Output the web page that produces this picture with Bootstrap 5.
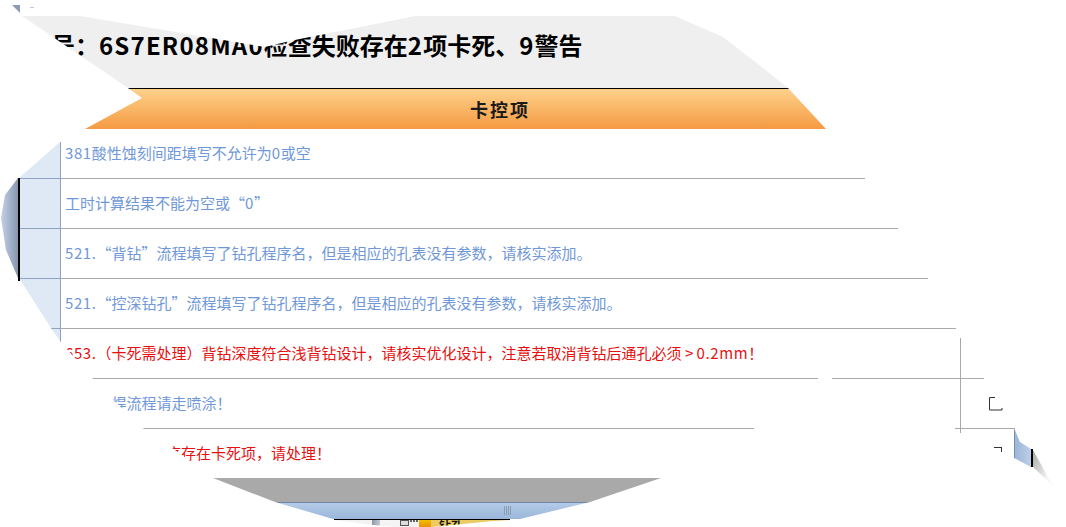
<!DOCTYPE html>
<html lang="zh">
<head>
<meta charset="utf-8">
<title>检查结果</title>
<link href="https://cdn.jsdelivr.net/npm/bootstrap@5.3.0/dist/css/bootstrap.min.css" rel="stylesheet">
<style>
html,body{height:527px;overflow:hidden;background:#fff}
body{font-family:"Noto Sans CJK SC","Liberation Sans",sans-serif;position:relative}
.sheet{width:1066px;padding-top:16px}
.title-band{height:72px;background:#efefef;color:#000;font-size:24px;font-weight:700;padding-left:27px;line-height:58px;
 clip-path:polygon(22px 0,80px 0,265px 31px,290px 25px,415px 0,675px 0,723px 21px,754px 45px,788px 72px,128px 72px)}
.title-num{letter-spacing:1.2px}
.head-band{height:41px;border-top:1px solid #000;background:linear-gradient(#fdd18b,#f59a42);font-size:18px;font-weight:700;letter-spacing:2px;color:#1a1a1a;padding-left:470px;line-height:40px;
 clip-path:polygon(128px 0,788px 0,826px 41px,85px 41px,142px 10px)}
.grid-area{clip-path:polygon(61px 13px,61px 0,865px 0,865px 50px,898px 50px,898px 100px,928px 100px,928px 150px,956px 150px,956px 200px,984px 200px,984px 250px,832px 250px,832px 249px,818px 249px,818px 250px,754px 250px,754px 300px,754px 349px,214px 349px,168px 316px,144px 300px,108px 266px,93px 250px,60px 212px,51px 199px,19px 149px,19px 49px,60px 13px)}
.grid-row{height:50px;border-bottom:1px solid #a9a9a9}
.grid-row:last-child{height:49px;border-bottom:0}
.row-mark{width:61px;height:50px;flex:none;background:#dfe8f5;border-right:1px solid #8ea3c3;border-bottom:1px solid #8ea3c3}
.row-text{font-size:15px;padding:0 0 0 4px;line-height:47px;white-space:nowrap}
.row-num{letter-spacing:.6px}
.tone-info{color:#7098d8}
.tone-stop{color:#e61010}
.gray-band{height:24px;background:#a9a9a9;clip-path:polygon(213px 0,661px 0,590px 24px,275px 24px)}
.scroll-band{height:17px;border-top:1px solid #6f86a6;background:linear-gradient(#b4cbe8,#9ab6d9);position:relative;clip-path:polygon(275px 0,590px 0,520px 17px,333px 17px)}
.grip{position:absolute;left:504px;top:3px;width:7px;height:9px;background:repeating-linear-gradient(90deg,#8b9db5 0 1px,transparent 1px 2px)}
.bar-edge{height:1px;background:#000;width:176px;margin-left:334px}
.tool-bit{height:7px;width:176px;margin-left:334px;overflow:hidden;background:#f2f2f2;clip-path:polygon(0 0,176px 0,159px 1px,98px 7px,66px 7px,39px 5px)}
.tool-handle{width:8px;margin-left:38px;background:linear-gradient(90deg,#8e99a6,#c3cbd4)}
.tool-gap{width:20px;background:#f4f4f4}
.tool-box{width:9px;height:6px;margin-left:0;border:1px solid #555;background:#ddd}
.tool-dots{width:8px;border-top:2px dotted #666;height:2px;margin-left:1px}
.tool-hot{width:12px;margin-left:1px;background:linear-gradient(#f4c000,#e8900a)}
.tool-label{flex:1;background:#eccb63;font-size:12px;font-weight:700;line-height:12px;padding-left:8px;color:#111;height:12px;white-space:nowrap}
.edge-strip{position:absolute;left:0;top:178px;width:19px;height:102px;background:linear-gradient(90deg,#c7d5e9,#8293ad);clip-path:polygon(18px 0,19px 0,19px 102px,18px 100px,6px 72px,1px 40px,5px 17px)}
.edge-line{position:absolute;left:18px;top:178px;width:2px;height:103px;background:#000}
.corner-chip{position:absolute;left:12px;top:5px;width:8px;height:8px;background:#8f9bb3;clip-path:polygon(0 0,100% 0,100% 100%)}
.tick{position:absolute;left:30px;top:7px;width:4px;height:1px;background:#c4ccd8}
.v-rule{position:absolute;left:960px;top:338px;width:1px;height:95px;background:#a9a9a9}
.h-rule{position:absolute;left:955px;top:428px;width:60px;height:1px;background:#a9a9a9}
.mark-a{position:absolute;left:989px;top:397px}
.mark-b{position:absolute;left:994px;top:447px;width:8px;height:5px;border-top:1px solid #333;border-right:1px solid #333}
.sliver{position:absolute;left:1014px;top:428px;width:17px;height:39px;border-left:1px solid #7a8fae;background:linear-gradient(90deg,#9cb6d9,#bccfe8);clip-path:polygon(0 0,6px 14px,17px 21px,17px 39px,0 30px)}
.sliver-end{position:absolute;left:1031px;top:449px;width:2px;height:18px;background:#000}
.shade-tail{position:absolute;left:1033px;top:450px;width:20px;height:36px;background:linear-gradient(115deg,#a8a8a8,#f6f6f6 75%);clip-path:polygon(0 0,20px 36px,0 17px)}
</style>
</head>
<body>
<div class="sheet">
  <div class="title-band text-nowrap">料号：<span class="title-num">6S7ER08MA0</span>检查失败存在<span class="title-num">2</span>项卡死、<span class="title-num">9</span>警告</div>
  <div class="head-band">卡控项</div>
  <div class="grid-area">
    <div class="grid-row d-flex"><div class="row-mark"></div><div class="row-text tone-info"><span class="row-num">381</span>酸性蚀刻间距填写不允许为<span class="row-num">0</span>或空</div></div>
    <div class="grid-row d-flex"><div class="row-mark"></div><div class="row-text tone-info">工时计算结果不能为空或“<span class="row-num">0</span>”</div></div>
    <div class="grid-row d-flex"><div class="row-mark"></div><div class="row-text tone-info"><span class="row-num">521.</span>“背钻”流程填写了钻孔程序名，但是相应的孔表没有参数，请核实添加。</div></div>
    <div class="grid-row d-flex"><div class="row-mark"></div><div class="row-text tone-info"><span class="row-num">521.</span>“控深钻孔”流程填写了钻孔程序名，但是相应的孔表没有参数，请核实添加。</div></div>
    <div class="grid-row d-flex"><div class="row-mark"></div><div class="row-text tone-stop"><span class="row-num">653.</span>（卡死需处理）背钻深度符合浅背钻设计，请核实优化设计，注意若取消背钻后通孔必须 &gt; <span class="row-num">0.2mm</span>！</div></div>
    <div class="grid-row d-flex"><div class="row-mark"></div><div class="row-text tone-info"><span class="row-num">654.</span>阻焊流程请走喷涂！</div></div>
    <div class="grid-row d-flex"><div class="row-mark"></div><div class="row-text tone-stop"><span class="row-num">65.</span> 钻孔工序程序存在卡死项，请处理！</div></div>
  </div>
  <div class="gray-band"></div>
  <div class="scroll-band"><div class="grip"></div></div>
  <div class="bar-edge"></div>
  <div class="tool-bit d-flex">
    <div class="tool-handle"></div><div class="tool-gap"></div><div class="tool-box"></div><div class="tool-dots"></div><div class="tool-hot"></div><div class="tool-label">钻孔</div>
  </div>
</div>
<div class="corner-chip"></div><div class="tick"></div>
<div class="edge-strip"></div><div class="edge-line"></div>
<div class="v-rule"></div><div class="h-rule"></div>
<svg class="mark-a" width="14" height="14" viewBox="0 0 14 14"><path d="M6 .5H.5v12.500h12.500v-2" fill="none" stroke="#333"/></svg>
<div class="mark-b"></div>
<div class="sliver"></div><div class="sliver-end"></div><div class="shade-tail"></div>
<script src="https://cdn.jsdelivr.net/npm/bootstrap@5.3.0/dist/js/bootstrap.bundle.min.js"></script>
</body>
</html>
